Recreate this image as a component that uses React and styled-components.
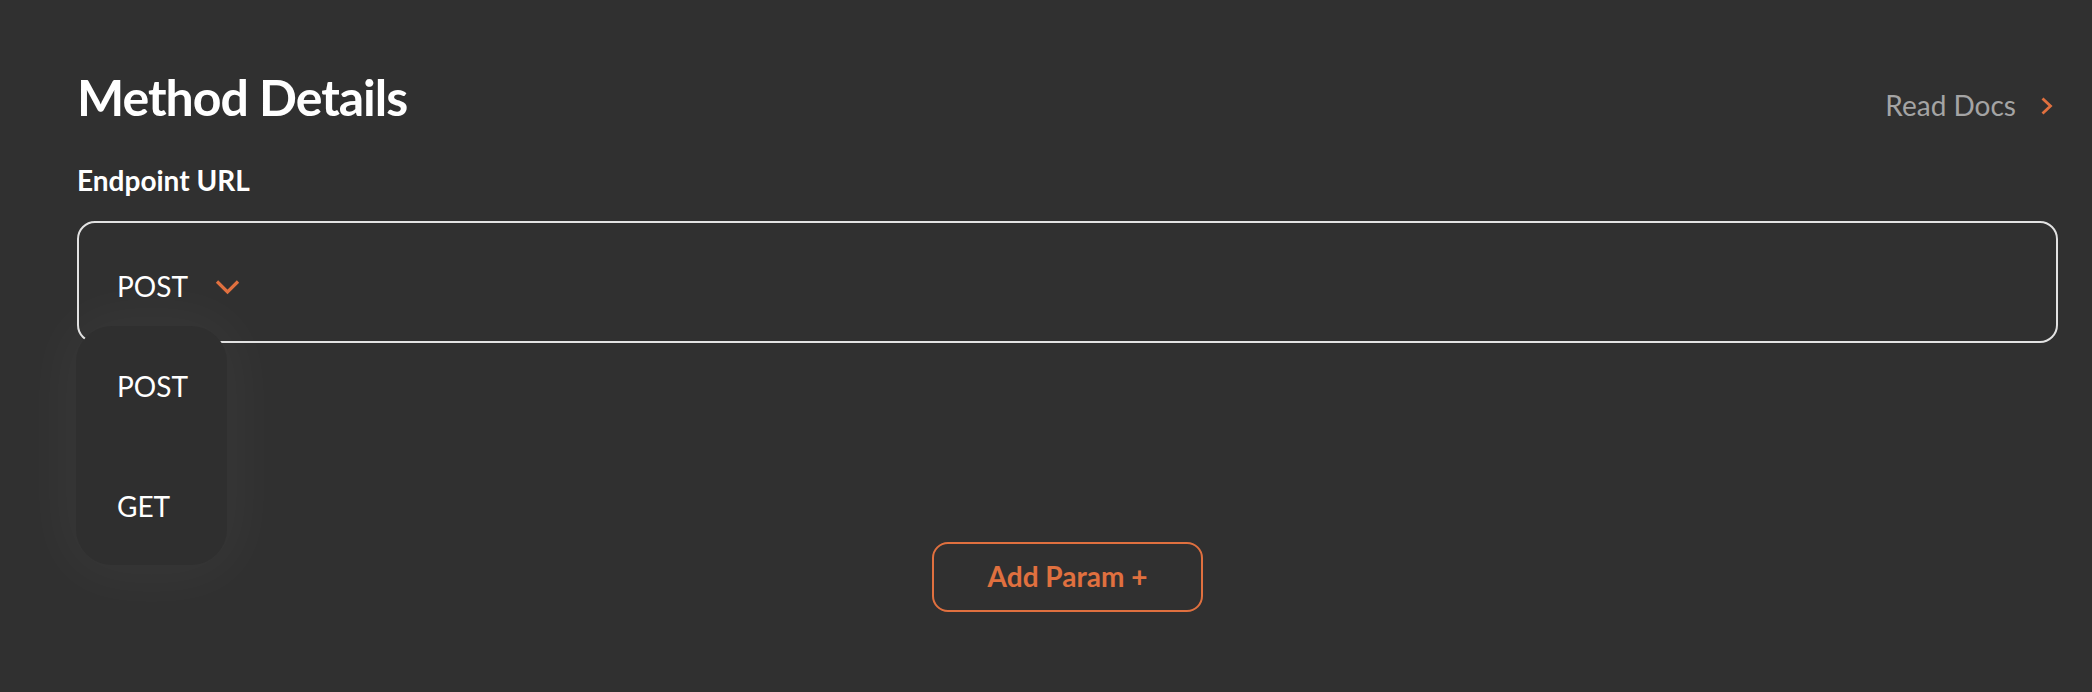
import { useState } from "react";
import styled, { createGlobalStyle } from "styled-components";

const GlobalStyle = createGlobalStyle`
  html, body {
    margin: 0;
    padding: 0;
    background: #303030;
    font-family: "Lato", "Noto Sans", sans-serif;
  }
  * {
    box-sizing: border-box;
  }
`;

const Page = styled.div`
  min-height: 692px;
  padding: 67px 34px 0 77px;
  color: #fff;
`;

const Header = styled.div`
  display: flex;
  justify-content: space-between;
  align-items: baseline;
  padding-right: 5px;
`;

const Title = styled.h1`
  margin: 0;
  font-size: 50px;
  line-height: 1.2;
  font-weight: 700;
  letter-spacing: -1px;
`;

const DocsLink = styled.a`
  display: flex;
  align-items: center;
  gap: 25px;
  font-size: 28px;
  line-height: 1.2;
  color: #a4a4a4;
  text-decoration: none;
  cursor: pointer;
`;

const Label = styled.div`
  margin-top: 37px;
  font-size: 28px;
  line-height: 1.2;
  font-weight: 700;
`;

const FieldWrap = styled.div`
  position: relative;
  margin-top: 23px;
`;

const Field = styled.div`
  height: 122px;
  border: 2px solid #e2e2e2;
  border-radius: 18px;
  display: flex;
  align-items: center;
  padding: 10px 0 0 38px;
`;

const MethodButton = styled.button`
  display: flex;
  align-items: center;
  gap: 27px;
  background: none;
  border: none;
  padding: 0;
  color: #fff;
  font-family: inherit;
  font-size: 28px;
  line-height: 1.2;
  cursor: pointer;
`;

const Menu = styled.ul`
  position: absolute;
  top: calc(100% - 17px);
  left: -1px;
  width: 151px;
  height: 239px;
  margin: 0;
  padding: 0;
  list-style: none;
  background: #2f2f2f;
  border-radius: 36px;
  box-shadow: 0 0 60px 14px rgba(255, 255, 255, 0.035);
  overflow: hidden;
`;

const MenuItem = styled.li`
  height: 120px;
  line-height: 120px;
  padding-left: 41px;
  font-size: 28px;
  color: #fff;
  cursor: pointer;
`;

const Actions = styled.div`
  display: flex;
  justify-content: center;
  margin-top: 199px;
`;

const AddButton = styled.button`
  width: 271px;
  height: 70px;
  border: 2px solid #e0703f;
  border-radius: 16px;
  background: transparent;
  color: #e0703f;
  font-family: inherit;
  font-size: 28px;
  font-weight: 700;
  line-height: 1.2;
  cursor: pointer;
`;

function Chevron({ dir = "down" }) {
  if (dir === "right") {
    return (
      <svg width="12" height="18" viewBox="0 0 12 18" fill="none">
        <path d="M1.5 1.5 L9.5 9 L1.5 16.5" stroke="#e0703f" strokeWidth="2.8" />
      </svg>
    );
  }
  return (
    <svg width="25" height="16" viewBox="0 0 25 16" fill="none">
      <path d="M2 2.5 L12.5 13 L23 2.5" stroke="#e0703f" strokeWidth="3.2" />
    </svg>
  );
}

export default function App() {
  const [method, setMethod] = useState("POST");
  const [open, setOpen] = useState(true);
  const methods = ["POST", "GET"];

  return (
    <Page>
      <GlobalStyle />
      <Header>
        <Title>Method Details</Title>
        <DocsLink>
          Read Docs
          <Chevron dir="right" />
        </DocsLink>
      </Header>
      <Label>Endpoint URL</Label>
      <FieldWrap>
        <Field>
          <MethodButton onClick={() => setOpen(!open)}>
            {method}
            <Chevron />
          </MethodButton>
        </Field>
        {open && (
          <Menu>
            {methods.map((m) => (
              <MenuItem
                key={m}
                onClick={() => {
                  setMethod(m);
                  setOpen(false);
                }}
              >
                {m}
              </MenuItem>
            ))}
          </Menu>
        )}
      </FieldWrap>
      <Actions>
        <AddButton>Add Param +</AddButton>
      </Actions>
    </Page>
  );
}
